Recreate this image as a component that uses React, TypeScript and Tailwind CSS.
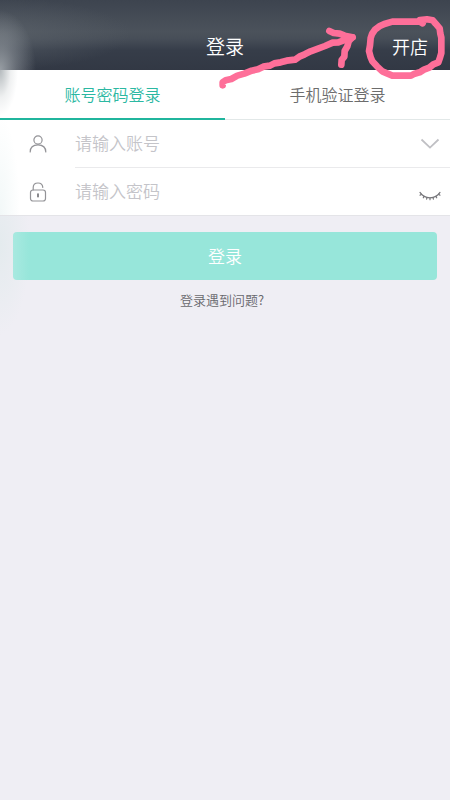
import { useState } from "react";

const TABS = ["账号密码登录", "手机验证登录"];

function UserIcon() {
  return (
    <svg viewBox="0 0 18 18" className="w-[18px] h-[18px]" fill="none" stroke="#939397" strokeWidth="1.2" strokeLinecap="round">
      <circle cx="9" cy="5" r="4.1" />
      <path d="M1.2 17C1.2 12.4 4.4 9.9 9 9.9S16.8 12.4 16.8 17" />
    </svg>
  );
}

function LockIcon() {
  return (
    <svg viewBox="0 0 18 20" className="w-[18px] h-[20px]" fill="none" stroke="#939397" strokeWidth="1.2" strokeLinecap="round">
      <rect x="1.5" y="8" width="15" height="11" rx="2.5" />
      <path d="M4.2 7.8V5.6C4.2 2.8 6.2 1 9 1c2.6 0 4.6 1.7 4.8 4.4" />
      <path d="M9 12v2.8" stroke="#6b6b70" strokeWidth="1.6" />
    </svg>
  );
}

function ChevronIcon() {
  return (
    <svg viewBox="0 0 20 12" className="w-[20px] h-[12px]" fill="none" stroke="#c0c0c4" strokeWidth="1.8">
      <path d="M1.5 1.5L10 9.6 18.5 1.5" />
    </svg>
  );
}

function ClosedEyeIcon() {
  return (
    <svg viewBox="0 0 22 10" className="w-[22px] h-[10px]" fill="none" stroke="#77777b" strokeWidth="1.2" strokeLinecap="round">
      <path d="M1 1.4C5.5 8.6 16.5 8.6 21 1.4" />
      <path d="M2.4 3.2L1 4.2M5.1 5.3L4.3 6.8M8 6.5L7.6 8.2M11 6.9V8.7M14 6.5L14.4 8.2M16.9 5.3L17.7 6.8M19.6 3.2L21 4.2" />
    </svg>
  );
}

// Hand-drawn pink arrow and ring that point at the "open a shop" link
function Annotation() {
  return (
    <svg
      viewBox="0 0 720 270"
      className="absolute right-0 top-0 w-[240px] h-[90px] pointer-events-none"
      fill="none"
      stroke="#fe6f99"
      strokeWidth="20"
      strokeLinecap="round"
      strokeLinejoin="round"
      aria-hidden="true"
    >
      <path d="M38 256L38 247 47 241 64 237 82 227 103 221 125 212 144 208 160 200 180 197 193 190 212 187 230 182 255 179 268 170 284 163 302 154 324 146 345 138 368 128 385 127 401 121 428 112" />
      <path d="M358 93L371 99 389 101 404 107 427 112 416 124 412 139 404 153 403 170 395 180 394 194" />
      <path d="M638 70L630 65H547L523 72 508 79 495 89 486 102 482 114 480 136 477 153 482 172 487 184 501 199 517 214 531 220 547 227H603L614 221 629 217 642 209 658 203 670 193 685 187 690 173 694 159V113L691 101 689 85 677 71 668 61 651 58 630 60" />
    </svg>
  );
}

export default function App() {
  const [tab, setTab] = useState(0);

  return (
    <div className="relative min-h-screen bg-[#efeef4] font-['Noto_Sans_CJK_SC',sans-serif] font-[350] bg-[radial-gradient(ellipse_30px_90px_at_0_245px,#e4ebee,transparent)]">
      {/* Header */}
      <header className="grid grid-cols-3 items-center h-[70px] pt-[22px] pr-[22px] text-white bg-[radial-gradient(ellipse_36px_60px_at_0_70px,#989ea4,#989ea480_45%,transparent),radial-gradient(ellipse_130px_36px_at_0_34px,#5d646ca0,transparent),linear-gradient(#3d444f,#4b525b_45%,#474e58_55%,#363d49_72%,#323844)]">
        <h1 className="col-start-2 text-center text-[19px] leading-6 pl-[22px]">登录</h1>
        <a href="#open-shop" className="justify-self-end text-[18px] leading-6">
          开店
        </a>
      </header>

      {/* Login form */}
      <main>
        <div className="bg-white bg-[radial-gradient(ellipse_18px_46px_at_0_0,#b4babd,#dfe2e380_60%,transparent),radial-gradient(ellipse_20px_100px_at_0_100%,#f2f8f8,transparent)] border-b border-[#e4e4e8]">
          <div className="flex h-[50px]" role="tablist">
            {TABS.map((label, index) => (
              <button
                key={label}
                type="button"
                role="tab"
                aria-selected={tab === index}
                onClick={() => setTab(index)}
                className={
                  tab === index
                    ? "flex-1 text-[16px] leading-6 text-[#2bb8a2] border-b-2 border-[#20b59d]"
                    : "flex-1 pb-px text-[16px] leading-6 text-[#6c6c6c] border-b border-[#e2e8e8]"
                }
              >
                {label}
              </button>
            ))}
          </div>

          <div className="flex items-center h-12 pr-2">
            <label htmlFor="account" aria-label="账号" className="flex justify-center w-[75px]">
              <UserIcon />
            </label>
            <div className="flex flex-1 items-center self-stretch border-b border-[#eaeaec] -mr-2 pr-2">
              <input
                id="account"
                type="text"
                placeholder="请输入账号"
                className="flex-1 min-w-0 pb-0.5 text-[17px] leading-6 text-[#333333] placeholder:text-[#c4c4c9] outline-none"
              />
              <button type="button" aria-label="选择账号" className="flex justify-center w-6">
                <ChevronIcon />
              </button>
            </div>
          </div>

          <div className="flex items-center h-[47px] pr-2">
            <label htmlFor="password" aria-label="密码" className="flex justify-center w-[75px]">
              <LockIcon />
            </label>
            <input
              id="password"
              type="password"
              placeholder="请输入密码"
              className="flex-1 min-w-0 pb-0.5 text-[17px] leading-6 text-[#333333] placeholder:text-[#c4c4c9] outline-none"
            />
            <button type="button" aria-label="显示密码" className="flex justify-center w-6 pt-2">
              <ClosedEyeIcon />
            </button>
          </div>
        </div>

        <div className="px-[13px] pt-4">
          <button
            type="submit"
            className="w-full h-12 rounded text-[17px] leading-6 text-white bg-[#97e6da] bg-[linear-gradient(90deg,#a8e9e0,transparent_16px)]"
          >
            登录
          </button>
        </div>

        <div className="flex justify-center pt-2 pr-1.5">
          <a href="#help" className="text-[13px] leading-6 text-[#68686d]">
            登录遇到问题?
          </a>
        </div>
      </main>

      <Annotation />
    </div>
  );
}
